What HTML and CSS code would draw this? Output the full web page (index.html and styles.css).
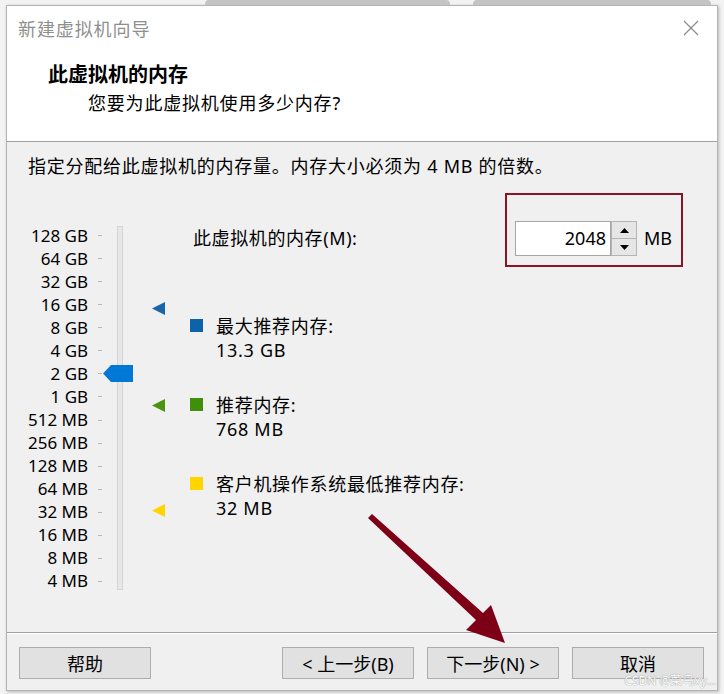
FILE: index.html
```html
<!DOCTYPE html>
<html lang="zh-CN">
<head>
	<meta charset="UTF-8">
	<title>新建虚拟机向导</title>
	<link rel="stylesheet" href="styles.css">
</head>
<body>
	<div class="strip"><i class="tab1"></i><i class="tab2"></i></div>

	<div class="window">
		<div class="head">
			<div class="titlebar">
				<span class="title">新建虚拟机向导</span>
				<svg class="close" width="16" height="16" viewBox="0 0 16 16"><path d="M1 1L15 15M15 1L1 15" stroke="#8a8a8a" stroke-width="1.2" fill="none"/></svg>
			</div>
			<div class="heading">此虚拟机的内存</div>
			<div class="subheading">您要为此虚拟机使用多少内存?</div>
		</div>

		<div class="main">
			<p class="intro">指定分配给此虚拟机的内存量。内存大小必须为 4 MB 的倍数。</p>
			<div class="panel">
				<div class="scale">
					<ul class="labels">
						<li><span>128 GB</span><i></i></li>
						<li><span>64 GB</span><i></i></li>
						<li><span>32 GB</span><i></i></li>
						<li><span>16 GB</span><i></i></li>
						<li><span>8 GB</span><i></i></li>
						<li><span>4 GB</span><i></i></li>
						<li><span>2 GB</span><i></i></li>
						<li><span>1 GB</span><i></i></li>
						<li><span>512 MB</span><i></i></li>
						<li><span>256 MB</span><i></i></li>
						<li><span>128 MB</span><i></i></li>
						<li><span>64 MB</span><i></i></li>
						<li><span>32 MB</span><i></i></li>
						<li><span>16 MB</span><i></i></li>
						<li><span>8 MB</span><i></i></li>
						<li><span>4 MB</span><i></i></li>
					</ul>
					<div class="track"></div>
					<!-- 滑块 -->
					<svg class="thumb" width="30" height="17" viewBox="0 0 30 17"><path d="M0 8.5L8 0H30V17H8Z" fill="#0078d7"/></svg>
					<!-- 推荐值标记 -->
					<svg class="mark" style="top:109px" width="14" height="14" viewBox="0 0 14 14"><path d="M0 6.5L13 0V13Z" fill="#1a64aa"/></svg>
					<svg class="mark" style="top:206px" width="14" height="14" viewBox="0 0 14 14"><path d="M0 6.5L13 0V13Z" fill="#4b9412"/></svg>
					<svg class="mark" style="top:311px" width="14" height="14" viewBox="0 0 14 14"><path d="M0 6.5L13 0V13Z" fill="#ffd400"/></svg>
				</div>

				<div class="side">
					<div class="memrow">
						<span class="memlabel">此虚拟机的内存(M):</span>
						<div class="highlight">
							<div class="field">2048</div>
							<div class="spin">
								<span class="up"><svg width="9" height="5" viewBox="0 0 9 5"><path d="M0 5L4.5 0L9 5Z" fill="#000"/></svg></span>
								<span class="down"><svg width="9" height="5" viewBox="0 0 9 5"><path d="M0 0L4.5 5L9 0Z" fill="#000"/></svg></span>
							</div>
							<span class="unit">MB</span>
						</div>
					</div>
					<ul class="legend">
						<li><i class="sq blue"></i><div>最大推荐内存:<br>13.3 GB</div></li>
						<li><i class="sq green"></i><div>推荐内存:<br>768 MB</div></li>
						<li><i class="sq yellow"></i><div>客户机操作系统最低推荐内存:<br>32 MB</div></li>
					</ul>
				</div>
			</div>
		</div>

		<div class="foot">
			<button class="btn">帮助</button>
			<button class="btn back">&lt; 上一步(B)</button>
			<button class="btn">下一步(N) &gt;</button>
			<button class="btn">取消</button>
		</div>
	</div>

	<svg class="arrow" width="724" height="694" viewBox="0 0 724 694">
		<path d="M372 514L483 613L491 605L505 643L466 630L476 620L368 518Z" fill="#7d0016"/>
	</svg>
	<div class="watermark">CSDN @菜鸟xy...</div>
</body>
</html>
```

FILE: styles.css
```css
*{
	padding: 0;
	margin: 0;
	box-sizing: border-box;
}
ul {
	list-style: none;
}
body {
	width: 724px;
	height: 694px;
	background: #f3f3f3;
	font-family: "Noto Sans", "Noto Sans CJK SC", sans-serif;
	font-size: 18px;
	color: #000;
	position: relative;
	overflow: hidden;
}
.strip {
	height: 5px;
	display: flex;
}
.strip i {
	display: block;
	height: 5px;
	background: #c4c4c4;
	border-radius: 4px 4px 0 0;
}
.strip .tab1 {
	margin-left: 205px;
	width: 245px;
}
.strip .tab2 {
	margin-left: 23px;
	width: 238px;
}
.window {
	margin-left: 6px;
	width: 712px;
	height: 686px;
	border: 1px solid #b4b4b4;
	background: #f0f0f0;
	box-shadow: 1px 1px 3px rgba(0,0,0,0.25);
	display: flex;
	flex-direction: column;
}

/* 顶部 */
.head {
	height: 136px;
	background: #fff;
	border-bottom: 1px solid #a0a0a0;
}
.titlebar {
	height: 44px;
	display: flex;
	align-items: center;
	padding: 0 18px 0 11px;
}
.title {
	color: #8f8f8f;
	font-size: 18px;
	letter-spacing: 0.9px;
}
.close {
	margin-left: auto;
}
.heading {
	margin-top: 11px;
	padding-left: 41px;
	line-height: 28px;
	font-weight: bold;
	font-size: 20px;
}
.subheading {
	padding-left: 81px;
	line-height: 28px;
	font-size: 18px;
	letter-spacing: 0.8px;
}

/* 内容 */
.main {
	height: 491px;
	padding: 12px 34px 0 21px;
	border-bottom: 1px solid #a0a0a0;
	box-shadow: 0 1px 0 #fff;
}
.intro {
	line-height: 24px;
	letter-spacing: 0.75px;
}
.panel {
	margin-top: 15px;
	display: flex;
}
.scale {
	position: relative;
	width: 140px;
	height: 398px;
	display: flex;
	align-items: flex-start;
}
.labels {
	margin-top: 31px;
	width: 73px;
	display: grid;
	grid-auto-rows: 23.07px;
	font-size: 17px;
}
.labels li {
	display: flex;
	align-items: center;
	justify-content: flex-end;
}
.labels span {
	white-space: nowrap;
	line-height: 20px;
}
.labels i {
	margin-left: 10px;
	width: 4px;
	height: 1px;
	background: #b8b8b8;
}
.track {
	margin-top: 33px;
	margin-left: 16px;
	width: 6px;
	height: 364px;
	background: #e7e7e7;
	border: 1px solid #d6d6d6;
}
.thumb {
	position: absolute;
	left: 75px;
	top: 172px;
}
.mark {
	position: absolute;
	left: 124px;
}
.side {
	flex: 1;
	margin-left: 22px;
}
.memrow {
	display: flex;
	align-items: center;
	height: 74px;
}
.memlabel {
	padding-left: 3px;
	padding-top: 14px;
	letter-spacing: 0.6px;
}
.highlight {
	margin-left: auto;
	width: 178px;
	height: 74px;
	border: 2px solid #8c1427;
	padding: 26px 0 0 8px;
	display: flex;
	align-items: flex-start;
}
.field {
	width: 96px;
	height: 35px;
	background: #fff;
	border: 1px solid #a6a6a6;
	text-align: right;
	padding-right: 4px;
	line-height: 33px;
}
.spin {
	width: 26px;
	height: 35px;
	display: flex;
	flex-direction: column;
}
.spin span {
	flex: 1;
	display: flex;
	align-items: center;
	justify-content: center;
	background: #e6e6e6;
	border: 1px solid #b4b4b4;
}
.spin .down {
	border-top: none;
}
.unit {
	margin-left: 7px;
	line-height: 35px;
}
.legend {
	margin-top: 47px;
	display: flex;
	flex-direction: column;
	gap: 31px;
}
.legend li {
	display: flex;
	align-items: flex-start;
	line-height: 24px;
	letter-spacing: 0.7px;
}
.sq {
	width: 13px;
	height: 13px;
	margin-top: 5px;
	margin-right: 13px;
}
.sq.blue {
	background: #0d63aa;
}
.sq.green {
	background: #3f8f0b;
}
.sq.yellow {
	background: #ffd500;
}

/* 底部按钮 */
.foot {
	flex: 1;
	display: flex;
	align-items: flex-start;
	padding: 14px 13px 0 12px;
	gap: 13px;
}
.btn {
	width: 132px;
	height: 32px;
	background: #e1e1e1;
	border: 1px solid #adadad;
	font-family: inherit;
	font-size: 18px;
	color: #000;
}
.btn.back {
	margin-left: auto;
}

.arrow {
	position: absolute;
	left: 0;
	top: 0;
	pointer-events: none;
}
.watermark {
	position: absolute;
	right: 8px;
	bottom: 5px;
	font-size: 12px;
	color: #fff;
	text-shadow: 0 0 1px #9a9a9a, 0 0 1px #9a9a9a;
}
```
